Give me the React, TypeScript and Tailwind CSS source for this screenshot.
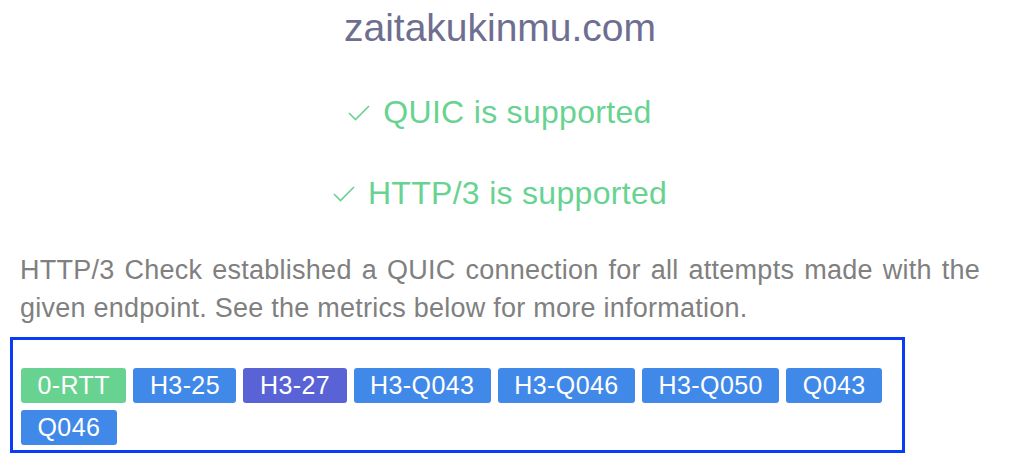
import React from "react";

const protocols = [
  { label: "0-RTT", color: "bg-[#68d391]" },
  { label: "H3-25", color: "bg-[#4189e8]" },
  { label: "H3-27", color: "bg-[#5a63d6]" },
  { label: "H3-Q043", color: "bg-[#4189e8]" },
  { label: "H3-Q046", color: "bg-[#4189e8]" },
  { label: "H3-Q050", color: "bg-[#4189e8]" },
  { label: "Q043", color: "bg-[#4189e8]" },
  { label: "Q046", color: "bg-[#4189e8]" },
];

function Check() {
  return (
    <svg width="22" height="16" viewBox="0 0 22 16" className="mr-[13px] mt-[2px]">
      <polyline points="1,8 7.5,14.5 21,1" fill="none" stroke="#68d391" strokeWidth="1.6" />
    </svg>
  );
}

function Supported({ name }: { name: string }) {
  return (
    <div className="flex items-center justify-center text-[32px] leading-[48px] tracking-[0.3px] text-[#68d391]">
      <Check />
      <span>{name} is supported</span>
    </div>
  );
}

export default function App() {
  return (
    <div className="w-[1024px] h-[460px] bg-white overflow-hidden font-['Liberation_Sans',Arial,sans-serif]">
      <div className="flex flex-col pl-[20px] pr-[44px] pt-[4px]">
        <h1 className="text-center text-[39px] leading-[48px] text-[#6e6e91]">zaitakukinmu.com</h1>
        <div className="mt-[36px]">
          <Supported name="QUIC" />
        </div>
        <div className="mt-[33px]">
          <Supported name="HTTP/3" />
        </div>
        <p className="mt-[34px] text-justify text-[27px] leading-[38px] tracking-[0.25px] text-[#808080]">
          HTTP/3 Check established a QUIC connection for all attempts made with the given endpoint. See the
          metrics below for more information.
        </p>
        <div className="mt-[10px] -ml-[10px] w-[895px] border-[3px] border-[#0b3cf5] pt-[28px] pl-[8px] pr-[8px] pb-[5px]">
          <div className="flex flex-wrap gap-[7px]">
            {protocols.map((p) => (
              <span
                key={p.label}
                className={`${p.color} rounded-[3px] px-[16.5px] h-[35px] flex items-center text-white text-[25px] tracking-[0.4px]`}
              >
                {p.label}
              </span>
            ))}
          </div>
        </div>
      </div>
    </div>
  );
}
